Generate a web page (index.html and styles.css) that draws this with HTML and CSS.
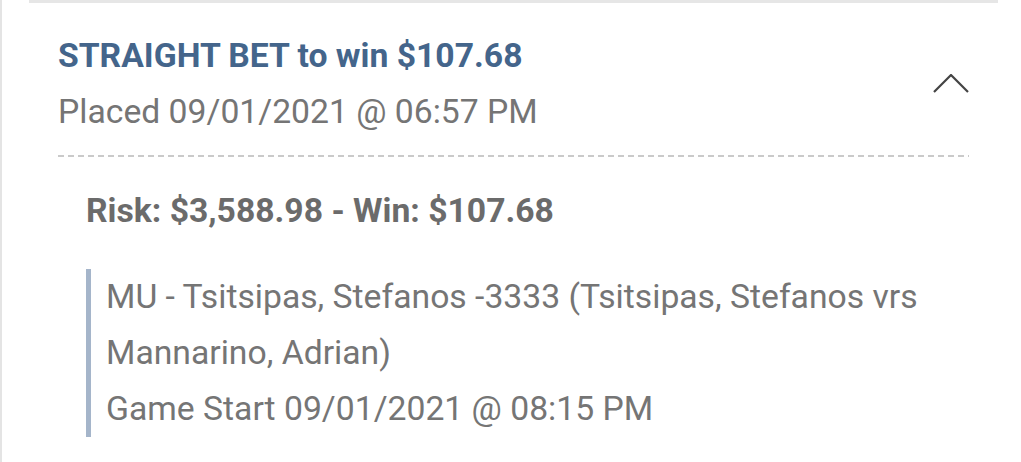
FILE: index.html
```html
<!DOCTYPE html>
<html lang="en">
<head>
    <meta charset="UTF-8">
    <title>Bet History</title>
    <link rel="stylesheet" href="styles.css">
</head>
<body>

    <div class="list">
        <div class="bet">
            <div class="bet-head">
                <div class="bet-title">
                    <h2>STRAIGHT BET to win $107.68</h2>
                    <p>Placed 09/01/2021 @ 06:57 PM</p>
                </div>
                <svg class="chevron" width="36" height="20" viewBox="0 0 36 20">
                    <polyline points="1,18 18,1 35,18" fill="none" stroke="#444" stroke-width="2.2"/>
                </svg>
            </div>

            <div class="bet-body">
                <div class="amounts">Risk: $3,588.98 - Win: $107.68</div>
                <div class="leg">
                    MU - Tsitsipas, Stefanos -3333 (Tsitsipas, Stefanos vrs Mannarino, Adrian)<br>
                    Game Start 09/01/2021 @ 08:15 PM
                </div>
            </div>
        </div>
    </div>

</body>
</html>
```

FILE: styles.css
```css
body {
    margin: 0;
    font-family: Roboto, 'Noto Sans', sans-serif;
    background: white;
}

.list {
    border-left: 2px solid #e4e4e4;
    min-height: 462px;
    box-sizing: border-box;
    padding: 0 23px 0 27px;
}

.bet {
    border-top: 3px solid #e6e6e6;
    padding: 24px 29px 0;
}

.bet-head {
    display: flex;
    justify-content: space-between;
    align-items: center;
    padding-bottom: 17px;
    background: repeating-linear-gradient(to right, #cacaca 0 6px, transparent 6px 10px) bottom / 100% 2px no-repeat;
}

.bet-title h2 {
    margin: 0;
    font-size: 33.7px;
    line-height: 57px;
    font-weight: bold;
    color: #44658b;
}

.bet-title p {
    margin: 0;
    font-size: 33.7px;
    line-height: 56px;
    color: #757575;
}

.chevron {
    display: block;
}

.bet-body {
    padding: 26px 0 0 28px;
}

.amounts {
    font-size: 33.7px;
    line-height: 56px;
    font-weight: bold;
    color: #6b6b6b;
    margin-bottom: 30px;
}

.leg {
    border-left: 5px solid #a5b5ca;
    padding-left: 15px;
    font-size: 33.7px;
    line-height: 56px;
    color: #757575;
}
```
